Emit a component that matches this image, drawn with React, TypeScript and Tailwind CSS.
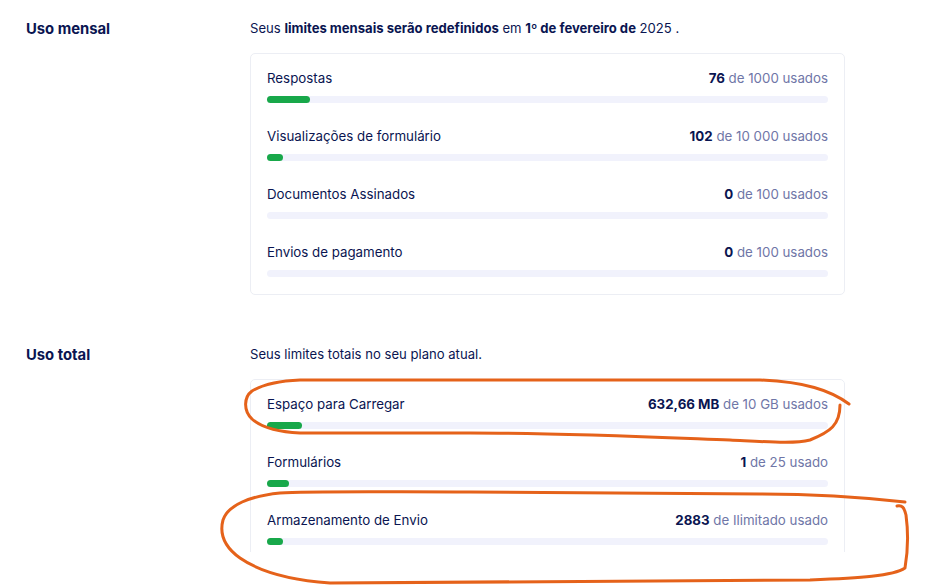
import React from "react";

type Row = { label: string; value: string; rest: string; pct: number };

const monthly: Row[] = [
  { label: "Respostas", value: "76", rest: "de 1000 usados", pct: 7.6 },
  { label: "Visualizações de formulário", value: "102", rest: "de 10 000 usados", pct: 1.02 },
  { label: "Documentos Assinados", value: "0", rest: "de 100 usados", pct: 0 },
  { label: "Envios de pagamento", value: "0", rest: "de 100 usados", pct: 0 },
];

const total: Row[] = [
  { label: "Espaço para Carregar", value: "632,66 MB", rest: "de 10 GB usados", pct: 6.2 },
  { label: "Formulários", value: "1", rest: "de 25 usado", pct: 4 },
  { label: "Armazenamento de Envio", value: "2883", rest: "de Ilimitado usado", pct: 0.5 },
];

function UsageRow({ row }: { row: Row }) {
  const w = row.pct <= 0 ? 0 : Math.max(16, (row.pct / 100) * 561);
  return (
    <div className="flex flex-col">
      <div className="flex h-[20px] items-center justify-between text-[13.3px]">
        <span className="text-[#0a1551]">{row.label}</span>
        <span className="text-[#6f76a7]">
          <span className="font-bold text-[#0a1551]">{row.value}</span> {row.rest}
        </span>
      </div>
      <div className="mt-[7px] h-[7px] w-full rounded-full bg-[#f1f2fc]">
        {w > 0 && <div className="h-full rounded-full bg-[#18a84a]" style={{ width: `${w}px` }} />}
      </div>
    </div>
  );
}

function Card({ rows }: { rows: Row[] }) {
  return (
    <div className="flex flex-col gap-[24px] rounded-[5px] border border-[#eceef4] px-[16px] pt-[15px] pb-[17px]">
      {rows.map((r) => (
        <UsageRow key={r.label} row={r} />
      ))}
    </div>
  );
}

export default function App() {
  return (
    <div
      className="relative h-[586px] w-[931px] overflow-hidden bg-white"
      style={{ fontFamily: "Inter, 'Noto Sans', sans-serif" }}
    >
      <div className="h-[552px] overflow-hidden pt-[18px]">
        <div className="flex">
          <div className="w-[250px] pl-[26px]">
            <h2 className="h-[20px] pt-[1px] text-[14.8px] leading-[20px] font-bold text-[#0a1551]">Uso mensal</h2>
          </div>
          <div className="w-[595px]">
            <p className="h-[20px] text-[13.1px] leading-[20px] text-[#0a1551]">
              Seus <b className="font-bold">limites mensais serão redefinidos</b> em{" "}
              <b className="font-bold">1º de fevereiro de</b> 2025 .
            </p>
            <div className="mt-[15px]">
              <Card rows={monthly} />
            </div>
          </div>
        </div>
        <div className="mt-[49px] flex">
          <div className="w-[250px] pl-[26px]">
            <h2 className="h-[20px] pt-[1px] text-[14.8px] leading-[20px] font-bold text-[#0a1551]">Uso total</h2>
          </div>
          <div className="w-[595px]">
            <p className="h-[20px] text-[13.1px] leading-[20px] text-[#0a1551]">
              Seus limites totais no seu plano atual.
            </p>
            <div className="mt-[15px]">
              <div className="h-[240px] overflow-hidden">
                <Card rows={total} />
              </div>
            </div>
          </div>
        </div>
      </div>
      <svg
        className="pointer-events-none absolute inset-0"
        width="931"
        height="586"
        viewBox="0 0 931 586"
        fill="none"
        stroke="#e5621a"
        strokeWidth="3"
        strokeLinecap="round"
        strokeLinejoin="round"
      >
        <path d="M849 404 C 830 390, 805 382, 760 380 L 300 380 C 275 381, 262 385, 252 391 C 244 397, 243 410, 252 419 C 262 428, 280 432, 300 433 L 470 433 C 560 433, 650 437, 730 440 C 770 442, 795 444, 810 440 C 830 432, 840 425, 840 405" />
        <path d="M905 502 C 860 497, 800 494, 760 494 L 470 492 C 380 492, 310 491, 280 493 C 250 496, 228 505, 223 520 C 219 535, 226 548, 240 558 C 260 572, 290 580, 330 583 L 810 580 C 860 578, 893 576, 905 568 C 909 545, 908 530, 906 515 C 904 507, 902 505, 897 506" />
      </svg>
    </div>
  );
}
